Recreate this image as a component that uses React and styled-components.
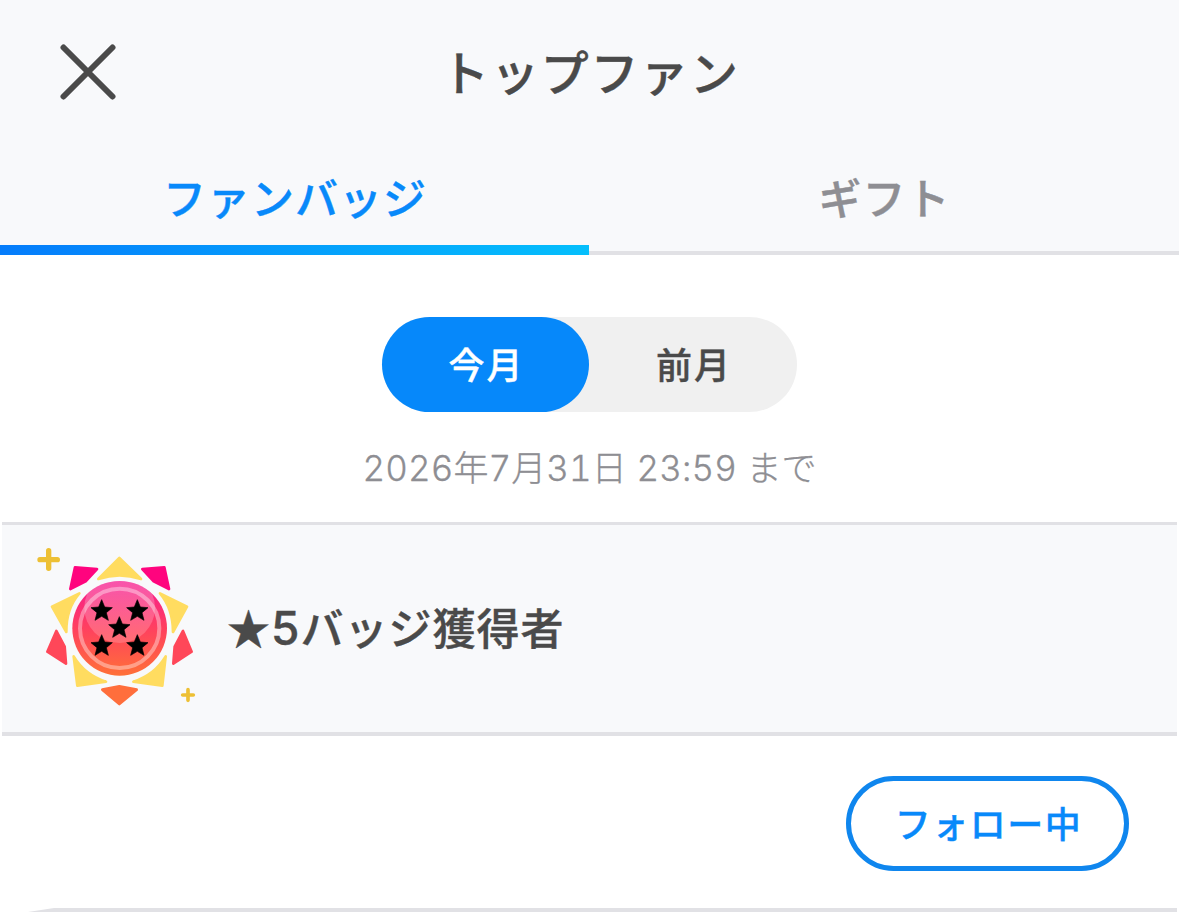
import React, { useState } from 'react';
import styled, { createGlobalStyle, css } from 'styled-components';

const GlobalStyle = createGlobalStyle`
  * {
    box-sizing: border-box;
  }

  body {
    margin: 0;
    background: #ffffff;
    font-family: "Noto Sans CJK JP", sans-serif;
    color: #4a4a4a;
  }

  button {
    padding: 0;
    border: 0;
    background: none;
    font-family: inherit;
    color: inherit;
    cursor: pointer;
  }
`;

const heading = css`
  font-weight: 500;
  -webkit-text-stroke: 0.4px currentColor;
`;

const Page = styled.div`
  display: flex;
  overflow: hidden;
  flex-direction: column;
  width: 1179px;
  height: 914px;
`;

const Header = styled.header`
  display: grid;
  align-items: center;
  grid-template-columns: 56px 1fr 56px;
  height: 144px;
  padding: 0 60px;
  background: #f8f9fb;
`;

const CloseButton = styled.button`
  display: flex;
  width: 56px;
  height: 56px;
`;

const Title = styled.h1`
  ${heading}
  margin: 0;
  padding: 0 0 4px 2px;
  font-size: 48px;
  line-height: 60px;
  letter-spacing: 1.8px;
  text-align: center;
`;

const Tabs = styled.nav`
  display: grid;
  grid-template-columns: 589px 590px;
  height: 111px;
  background: #f8f9fb;
`;

const Tab = styled.button`
  ${heading}
  display: flex;
  flex-direction: column;
  justify-content: flex-end;
  font-size: 43px;
  line-height: 60px;
  letter-spacing: 1px;
  color: ${({ $active }) => ($active ? '#0889fa' : '#8e8e93')};

  &::after {
    content: '';
    width: 100%;
    height: ${({ $active }) => ($active ? '10px' : '4px')};
    margin-top: ${({ $active }) => ($active ? '19px' : '25px')};
    background: ${({ $active }) => ($active
    ? 'linear-gradient(90deg, #057cfb, #05bffc)'
    : '#e1e1e5')};
  }
`;

const TabLabel = styled.span`
  width: 100%;
  padding-left: 1px;
  text-align: center;
`;

const Period = styled.section`
  display: flex;
  align-items: center;
  flex-direction: column;
  height: 267px;
  padding-top: 62px;
`;

const Switch = styled.div`
  display: grid;
  grid-template-columns: 207px 208px;
  width: 415px;
  height: 95px;
  border-radius: 48px;
  background: #f0f0f0;
`;

const SwitchOption = styled.button`
  ${heading}
  padding: 0 0 4px 2px;
  border-radius: 48px;
  font-size: 36px;
  letter-spacing: 2px;

  ${({ $active }) => $active && css`
    color: #ffffff;
    background: #0688fa;
  `}
`;

const Deadline = styled.p`
  margin: 31px 0 0;
  font-family: "Inter", "Noto Sans CJK JP", sans-serif;
  font-size: 35px;
  font-weight: 300;
  font-variant-numeric: tabular-nums;
  line-height: 50px;
  letter-spacing: 0.1px;
  white-space: nowrap;
  color: #8e8e93;
  -webkit-text-stroke: 0.3px currentColor;
`;

const BadgeRow = styled.section`
  display: flex;
  align-items: center;
  height: 214px;
  margin: 0 2px;
  padding: 2px 0 0 18px;
  border-top: 3px solid #e1e1e5;
  border-bottom: 4px solid #e1e1e5;
  background: #f8f9fb;
`;

const BadgeTitle = styled.h2`
  ${heading}
  margin: 0 0 0 7px;
  padding-bottom: 6px;
  font-size: 43px;
  line-height: 60px;
  letter-spacing: 1px;
`;

const Digit = styled.span`
  font-family: "Inter", sans-serif;
  font-size: 46px;
`;

const FanRow = styled.div`
  display: flex;
  align-items: flex-start;
  justify-content: flex-end;
  height: 172px;
  padding: 40px 50px 0 0;
`;

const FollowButton = styled.button`
  ${heading}
  width: 283px;
  height: 95px;
  padding: 0 0 4px 2px;
  border: 5px solid #0f86ee;
  border-radius: 48px;
  font-size: 36px;
  letter-spacing: 1.5px;
  color: #0889fa;
`;

const RowDivider = styled.div`
  height: 4px;
  margin: 0 2px 0 28px;
  background: #e1e1e5;
  clip-path: polygon(26px 0, 100% 0, 100% 100%, 0 100%);
`;

const STARS = [[245, 241], [352, 241], [298, 292], [245, 346], [352, 346]];

function CloseIcon() {
  return (
    <svg width="56" height="56" viewBox="0 0 56 56" fill="none" stroke="#4a4a4a" strokeWidth="6" strokeLinecap="round">
      <path d="M3.5 3.5l49 49M52.5 3.5l-49 49" />
    </svg>
  );
}

function FanBadge() {
  return (
    <svg width="200" height="200" viewBox="0 0 600 600">
      <defs>
        <linearGradient id="disc" x1="0" y1="0" x2="0" y2="1">
          <stop offset="0" stopColor="#f61a91" />
          <stop offset="0.5" stopColor="#ff405f" />
          <stop offset="1" stopColor="#ff7038" />
        </linearGradient>
        <linearGradient id="shine" x1="0" y1="0" x2="0" y2="1">
          <stop offset="0" stopColor="#fff" stopOpacity="0.26" />
          <stop offset="1" stopColor="#fff" stopOpacity="0.18" />
        </linearGradient>
        <clipPath id="discClip">
          <circle cx="299" cy="295" r="142" />
        </clipPath>
      </defs>
      <g strokeWidth="8" strokeLinejoin="round">
        <g fill="#ff047e" stroke="#ff047e">
          <path d="M165 112L231 117L197 154L151 177Z" />
          <path d="M433 112L367 117L401 154L447 177Z" />
        </g>
        <g fill="#ff4759" stroke="#ff4759">
          <path d="M109 303L134 350L138 401L82 365Z" />
          <path d="M489 303L464 350L460 401L515 365Z" />
        </g>
        <path fill="#ff6e3c" stroke="#ff6e3c" d="M247 479L298 469L350 479L298 522Z" />
        <g fill="#ffdc60" stroke="#ffdc60">
          <path d="M298 84L235 147Q298 125 363 147Z" />
          <path d="M96 230L178 190Q138 236 139 306Z" />
          <path d="M501 230L420 190Q459 236 459 306Z" />
          <path d="M161 379L172 467L258 455Q194 434 161 379Z" />
          <path d="M437 379L427 467L340 455Q404 434 437 379Z" />
        </g>
      </g>
      <circle cx="299" cy="295" r="142" fill="url(#disc)" />
      <circle cx="299" cy="233" r="106" fill="url(#shine)" clipPath="url(#discClip)" />
      <circle cx="299" cy="295" r="119" fill="none" stroke="#fff" strokeOpacity="0.38" strokeWidth="12" />
      {STARS.map(([x, y]) => (
        <path
          key={`${x}-${y}`}
          transform={`translate(${x} ${y})`}
          d="M0 -32L9 -10L32 -8L14 7L20 30L0 18L-20 30L-14 7L-32 -8L-9 -10Z"
          stroke="#000"
          strokeWidth="2"
          strokeLinejoin="round"
        />
      ))}
      <g stroke="#edc035" strokeLinecap="round">
        <path strokeWidth="16" d="M86 62V115M60 89H112" />
        <path strokeWidth="11" d="M504 479V511M488 495H520" />
      </g>
    </svg>
  );
}

function App() {
  const [tab, setTab] = useState('ファンバッジ');
  const [month, setMonth] = useState('今月');

  return (
    <Page>
      <GlobalStyle />
      <Header>
        <CloseButton aria-label="閉じる">
          <CloseIcon />
        </CloseButton>
        <Title>トップファン</Title>
      </Header>
      <Tabs>
        {['ファンバッジ', 'ギフト'].map((name) => (
          <Tab key={name} $active={tab === name} onClick={() => setTab(name)}>
            <TabLabel>{name}</TabLabel>
          </Tab>
        ))}
      </Tabs>
      <Period>
        <Switch>
          {['今月', '前月'].map((name) => (
            <SwitchOption key={name} $active={month === name} onClick={() => setMonth(name)}>
              {name}
            </SwitchOption>
          ))}
        </Switch>
        <Deadline>2026年7月31日 23:59 まで</Deadline>
      </Period>
      <BadgeRow>
        <FanBadge />
        <BadgeTitle>
          ★
          <Digit>5</Digit>
          バッジ獲得者
        </BadgeTitle>
      </BadgeRow>
      <FanRow>
        <FollowButton>フォロー中</FollowButton>
      </FanRow>
      <RowDivider />
    </Page>
  );
}

export default App;
